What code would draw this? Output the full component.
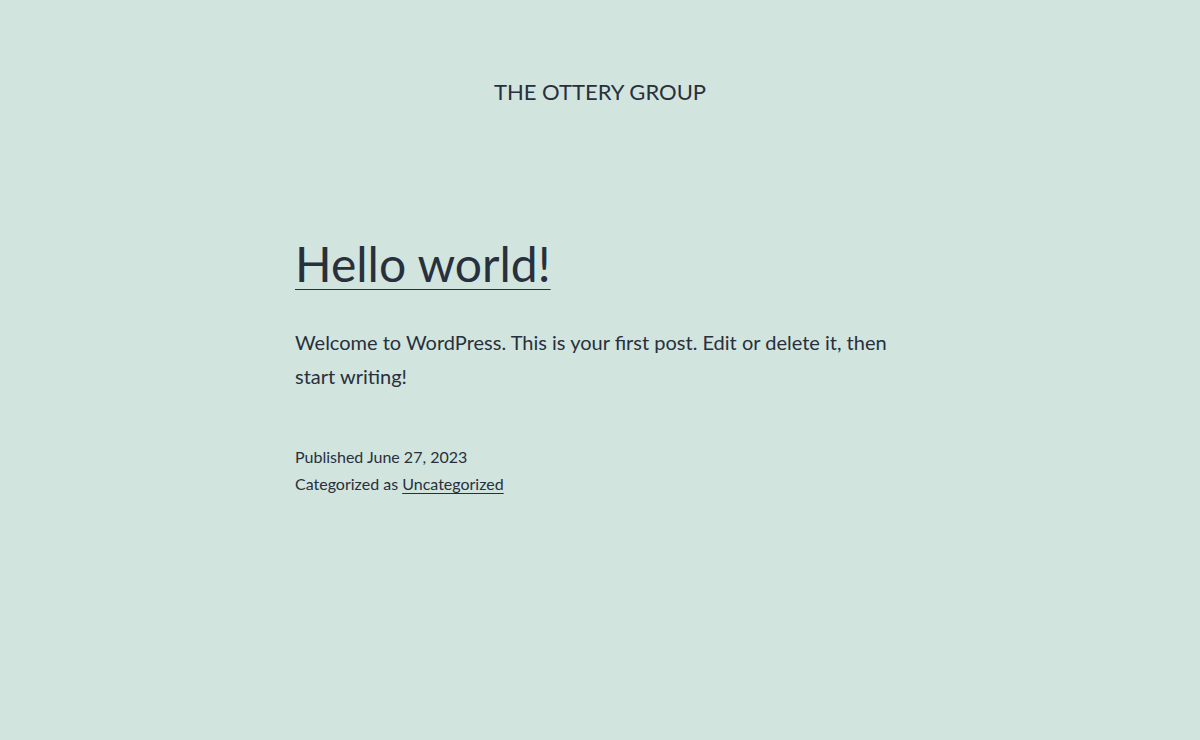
import React from "react";

export default function App() {
  return (
    <div
      className="min-h-[740px] w-full bg-[#d1e4dd] text-[#28303d]"
      style={{ fontFamily: "Lato, 'Noto Sans', sans-serif" }}
    >
      <header className="pt-[76px] text-center">
        <p className="text-[22px] leading-[31px] font-normal uppercase">
          The Ottery Group
        </p>
      </header>
      <main className="mx-auto w-[610px] pt-[126px]">
        <h2 className="text-[48px] leading-[62px] font-normal">
          <a
            href="#"
            className="underline decoration-1 underline-offset-[7px]"
          >
            Hello world!
          </a>
        </h2>
        <p className="mt-[30px] text-[20px] leading-[34px]">
          Welcome to WordPress. This is your first post. Edit or delete it, then
          start writing!
        </p>
        <div className="mt-[50px] text-[16px] leading-[27.2px]">
          <p>Published June 27, 2023</p>
          <p>
            Categorized as{" "}
            <a href="#" className="underline decoration-1 underline-offset-[3px]">
              Uncategorized
            </a>
          </p>
        </div>
      </main>
    </div>
  );
}
